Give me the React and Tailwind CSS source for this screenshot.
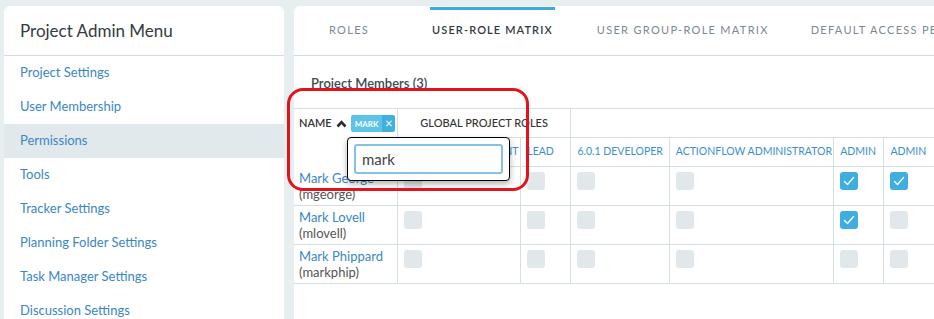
const menu = [
  "Project Settings",
  "User Membership",
  "Permissions",
  "Tools",
  "Tracker Settings",
  "Planning Folder Settings",
  "Task Manager Settings",
  "Discussion Settings",
];

const roleCols = [
  { label: "PROJECT CONSULTANT", w: "w-[123px]" },
  { label: "LEAD", w: "w-[50px]" },
  { label: "6.0.1 DEVELOPER", w: "w-[98px]" },
  { label: "ACTIONFLOW ADMINISTRATOR", w: "w-[164px]" },
  { label: "ADMIN", w: "w-[50px]" },
  { label: "ADMIN", w: "w-[50px]" },
  { label: "", w: "w-[100px]" },
];

const members = [
  { name: "Mark George", login: "mgeorge", checks: [0, 0, 0, 0, 1, 1, 0] },
  { name: "Mark Lovell", login: "mlovell", checks: [0, 0, 0, 0, 1, 0, 0] },
  { name: "Mark Phippard", login: "markphip", checks: [0, 0, 0, 0, 0, 0, 0] },
];

function Box({ on }) {
  if (on) {
    return (
      <div className="w-[18px] h-[18px] rounded-[3px] bg-[#3eaee0] flex items-center justify-center">
        <svg width="12" height="12" viewBox="0 0 12 12" fill="none">
          <polyline points="1.5,6.5 4.5,9.5 10.5,2.5" stroke="white" strokeWidth="1.4" strokeLinecap="round" strokeLinejoin="round" />
        </svg>
      </div>
    );
  }
  return <div className="w-[18px] h-[18px] rounded-[3px] bg-[#e1e8eb]" />;
}

export default function App() {
  return (
    <div
      className="relative w-[934px] h-[319px] overflow-hidden bg-[#e7eef0] flex gap-[10px] pl-[4px] pt-[6px]"
      style={{ fontFamily: "Lato, 'Open Sans', sans-serif" }}
    >
      {/* left menu */}
      <aside className="w-[280px] shrink-0 bg-white rounded-t-[6px]">
        <div className="h-[50px] border-b border-[#d3dce1] flex items-center pl-[16px]">
          <h1 className="text-[17px] text-[#333b41]">Project Admin Menu</h1>
        </div>
        <ul>
          {menu.map((m) => (
            <li
              key={m}
              className={`h-[34px] flex items-center pl-[16px] text-[13px] text-[#3a86c6] ${
                m === "Permissions" ? "bg-[#e1e9ec]" : ""
              }`}
            >
              {m}
            </li>
          ))}
        </ul>
      </aside>

      {/* right content */}
      <main className="flex-1 bg-white rounded-tl-[6px] overflow-hidden">
        <nav className="h-[50px] border-b border-[#d3dce1] flex items-stretch text-[11px] whitespace-nowrap">
          <div className="ml-[35px] flex items-center text-[#7b8893] tracking-[1.3px]">ROLES</div>
          <div className="ml-[61px] relative flex items-center text-[#2f3a42] font-semibold tracking-[1.1px] px-[2px]">
            <span className="absolute left-0 right-0 top-[1px] h-[3px] bg-[#41a8d9]" />
            USER-ROLE MATRIX
          </div>
          <div className="ml-[42px] flex items-center text-[#7b8893] tracking-[1.3px]">USER GROUP-ROLE MATRIX</div>
          <div className="ml-[42px] flex items-center text-[#7b8893] tracking-[1.3px]">DEFAULT ACCESS PERMISSIONS</div>
        </nav>

        <div className="h-[52px] pl-[17px] pt-[18px] text-[13px] font-semibold text-[#3d4a53]">
          Project Members (3)
        </div>

        <div className="relative">
          <table className="border-collapse table-fixed w-[741px] text-[11px]">
            <colgroup>
              <col className="w-[103px]" />
              {roleCols.map((c, i) => (
                <col key={i} className={c.w} />
              ))}
            </colgroup>
            <thead>
              <tr className="h-[29px]">
                <th rowSpan={2} className="border-t border-r border-[#d3dfe3] align-top text-left font-semibold text-[#333] pl-[5px] pt-[6px]">
                  <div className="flex items-center">
                    <span>NAME</span>
                    <svg className="ml-[4px]" width="11" height="8" viewBox="0 0 11 8">
                      <polyline points="1.5,6.5 5.5,2.2 9.5,6.5" stroke="#2d2d2d" strokeWidth="2.6" fill="none" />
                    </svg>
                    <span className="ml-[4px] flex h-[17px] rounded-[2px] overflow-hidden">
                      <span className="bg-[#5cc4e6] text-white text-[8px] font-bold px-[4px] flex items-center">MARK</span>
                      <span className="bg-[#3fb0df] text-white text-[13px] w-[13px] flex items-center justify-center leading-none font-normal">×</span>
                    </span>
                  </div>
                </th>
                <th colSpan={2} className="border-t border-r border-[#d3dfe3] font-medium text-[#333] text-center">
                  GLOBAL PROJECT ROLES
                </th>
                <th colSpan={5} className="border-t border-[#d3dfe3]" />
              </tr>
              <tr className="h-[29px]">
                {roleCols.map((c, i) => (
                  <th
                    key={i}
                    className="border border-[#d3dfe3] text-left font-normal text-[10.5px] text-[#3b8fcf] pl-[6px] whitespace-nowrap overflow-hidden"
                  >
                    {c.label}
                  </th>
                ))}
              </tr>
            </thead>
            <tbody>
              {members.map((m) => (
                <tr key={m.login} className="h-[39px]">
                  <td className="border-b border-r border-[#d3dfe3] align-top pl-[5px] pt-[3px] text-[13px] leading-[16px]">
                    <div className="text-[#3a86c6]">{m.name}</div>
                    <div className="text-[#555]">({m.login})</div>
                  </td>
                  {m.checks.map((c, i) => (
                    <td key={i} className="border border-[#d3dfe3] align-top pl-[6px] pt-[5px]">
                      {i < 6 && <Box on={c === 1} />}
                    </td>
                  ))}
                </tr>
              ))}
            </tbody>
          </table>

          {/* filter popup */}
          <div className="absolute left-[53px] top-[29px] w-[163px] h-[44px] bg-white border border-black rounded-[4px] shadow-[0_3px_6px_rgba(0,0,0,0.3)] pl-[6px] pt-[6px]">
            <div className="w-[149px] h-[30px] border-2 border-[#86c1e7] rounded-[3px] flex items-center pl-[6px] text-[15px] text-[#444]">
              mark
            </div>
          </div>
        </div>
      </main>

      {/* annotation */}
      <div className="absolute left-[287px] top-[88px] w-[242px] h-[103px] border-[3px] border-[#e3131b] rounded-[16px] pointer-events-none" />
    </div>
  );
}
